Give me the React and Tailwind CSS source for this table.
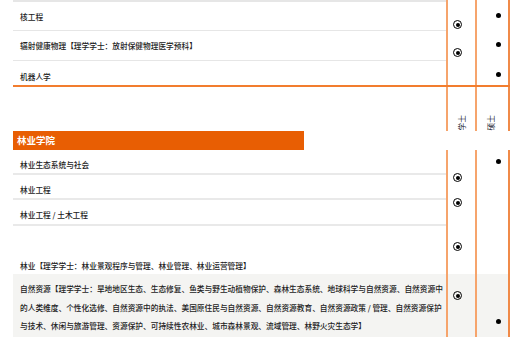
import React from 'react';
import clsx from 'clsx';

// Degree marks: ring = offered as a bachelor's track, dot = master's
const Ring = ({ className }) => (
  <div className={clsx('w-[9px] h-[9px] rounded-full border border-black flex items-center justify-center', className)}>
    <div className="w-[4px] h-[4px] rounded-full bg-black" />
  </div>
);

const Dot = ({ className }) => (
  <div className={clsx('w-[5px] h-[5px] rounded-full bg-black', className)} />
);

const Row = ({ children, h, textCls, ring, dot, rowCls }) => (
  <div className={clsx('flex w-[497px]', h, rowCls)}>
    <div className={clsx('w-[433px] shrink-0 pl-[7px] pr-[1px] text-[7.7px] text-[#222] font-medium', textCls)}>{children}</div>
    <div className="w-[29px] shrink-0 border-l-2 border-[#f6a46c] pl-[5px]">{ring && <Ring className={ring} />}</div>
    <div className="w-[35px] shrink-0 border-l-2 border-r-2 border-l-[#f6a46c] border-r-[#f08a48] pl-[19px]">
      {dot && <Dot className={dot} />}
    </div>
  </div>
);

const App = () => {
  return (
    <div className="w-[518px] h-[344px] overflow-hidden bg-white pl-[13px] font-['Noto_Sans_CJK_SC',sans-serif] leading-[10px]">
      {/* engineering majors, tail of the previous college */}
      <Row h="h-[31px]" textCls="pt-[10px] border-t-2 border-b border-[#e6e6e6]" ring="mt-[20px]" dot="mt-[13px]">
        核工程
      </Row>
      <Row h="h-[30px]" textCls="pt-[10px] border-b border-[#e6e6e6]" ring="mt-[17px]" dot="mt-[11px]">
        辐射健康物理【理学学士：放射保健物理医学预科】
      </Row>
      <Row h="h-[26px]" textCls="pt-[11px]" rowCls="border-b-2 border-[#f27d2e]" dot="mt-[11px]">
        机器人学
      </Row>

      {/* column headings */}
      <div className="flex w-[497px] h-[44px]">
        <div className="w-[433px] shrink-0" />
        <div className="w-[29px] shrink-0 border-l-2 border-[#f6a46c] flex justify-center items-end pb-[1px]">
          <span className="[writing-mode:vertical-rl] [text-orientation:sideways] rotate-180 text-[7.7px] leading-[8px] text-[#223]">学士</span>
        </div>
        <div className="w-[35px] shrink-0 border-l-2 border-r-2 border-l-[#f6a46c] border-r-[#f08a48] flex justify-center items-end pb-[1px]">
          <span className="[writing-mode:vertical-rl] [text-orientation:sideways] rotate-180 text-[7.7px] leading-[8px] text-[#223] -ml-[4px]">硕士</span>
        </div>
      </div>

      <div className="w-[291px] h-[19px] bg-[#e85e03] pl-[4px] text-white text-[9.5px] font-bold leading-[19px]">林业学院</div>

      <Row h="h-[25px]" textCls="pt-[10px] border-b-2 border-[#e9e9e9]" dot="mt-[9px]">
        林业生态系统与社会
      </Row>
      <Row h="h-[25px]" textCls="pt-[10px] border-b-2 border-[#e9e9e9]" ring="-mt-[2px]">
        林业工程
      </Row>
      <Row h="h-[26px]" textCls="pt-[10px] border-b-2 border-[#e9e9e9]" ring="-mt-[2px]">
        林业工程 / 土木工程
      </Row>
      <Row h="h-[48px]" textCls="pt-[35px]" ring="mt-[16px]">
        林业【理学学士：林业景观程序与管理、林业管理、林业运营管理】
      </Row>
      <Row h="h-[63px]" rowCls="bg-[#f4f4f2]" textCls="pt-[6px] leading-[18.5px]" ring="mt-[17px]" dot="mt-[45px]">
        自然资源【理学学士：旱地地区生态、生态修复、鱼类与野生动植物保护、森林生态系统、地球科学与自然资源、自然资源中的人类维度、个性化选修、自然资源中的执法、美国原住民与自然资源、自然资源教育、自然资源政策 / 管理、自然资源保护与技术、休闲与旅游管理、资源保护、可持续性农林业、城市森林景观、流域管理、林野火灾生态学】
      </Row>
    </div>
  );
};

export default App;
